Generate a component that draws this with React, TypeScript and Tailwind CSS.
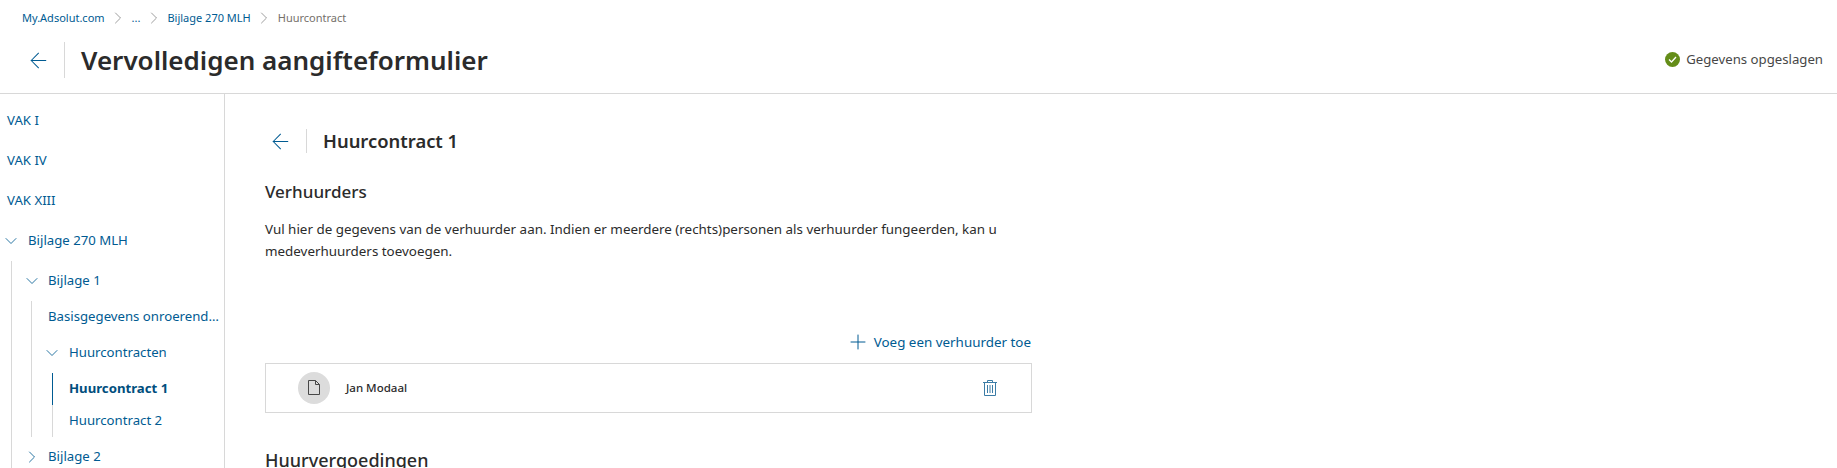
import React from 'react';
import { ArrowLeft, ChevronDown, ChevronRight, Plus } from 'lucide-react';

const font = { fontFamily: '"Noto Sans", sans-serif' };

const Crumb: React.FC<{ label: string; muted?: boolean; last?: boolean }> = ({ label, muted, last }) => (
  <>
    <span className={muted ? 'text-[#75706b]' : 'text-[#005b92]'}>{label}</span>
    {!last && <ChevronRight className="w-[20px] h-[20px] text-[#8a8a8a] mx-[3.5px]" strokeWidth={1} />}
  </>
);

const FileIcon = () => (
  <svg width="14" height="16" viewBox="0 0 14 16" fill="none" stroke="#474747" strokeWidth="1">
    <path d="M1.5 0.5H8.5L12.5 4.5V14.5H1.5Z" />
    <path d="M8.5 0.5V4.5H12.5" />
  </svg>
);

const TrashIcon = () => (
  <svg className="ml-auto text-[#3b7ca6]" width="14" height="16" viewBox="0 0 14 16" fill="none" stroke="currentColor" strokeWidth="1">
    <path d="M0 2.5H14" />
    <path d="M4.5 2.5V0.5H9.5V2.5" />
    <path d="M1.5 2.5V15.5H12.5V2.5" />
    <path d="M4.5 5V13M7 5V13M9.5 5V13" />
  </svg>
);

const App: React.FC = () => {
  return (
    <div className="w-[1837px] h-[468px] overflow-hidden bg-white text-[#2b2b2b] flex flex-col" style={font}>
      {/* Header */}
      <header className="h-[94px] shrink-0 border-b border-[#d8d8d8] flex flex-col">
        <nav className="flex items-center h-[20px] mt-[8px] pl-[22px] text-[11px]">
          <Crumb label="My.Adsolut.com" />
          <Crumb label="..." />
          <Crumb label="Bijlage 270 MLH" />
          <Crumb label="Huurcontract" muted last />
        </nav>
        <div className="flex items-center mt-[14px] h-[36px]">
          <div className="w-[65px] h-full border-r border-[#d8d8d8] flex items-center pl-[26px] mr-[16px] shrink-0">
            <ArrowLeft className="w-[25px] h-[25px] shrink-0 text-[#005b92]" strokeWidth={1} />
          </div>
          <h1 className="text-[26px] font-semibold leading-none">Vervolledigen aangifteformulier</h1>
          <div className="ml-auto pr-[14px] flex items-center text-[13.2px] text-[#474747]">
            <span className="w-[15px] h-[15px] rounded-full bg-[#648d18] flex items-center justify-center mr-[6px]">
              <svg width="9" height="7" viewBox="0 0 9 7" fill="none" stroke="white" strokeWidth="1.3">
                <path d="M1 3.5L3.5 6L8 1" />
              </svg>
            </span>
            Gegevens opgeslagen
          </div>
        </div>
      </header>

      <div className="flex flex-1 min-h-0">
        {/* Sidebar */}
        <aside className="w-[225px] shrink-0 border-r border-[#d8d8d8] text-[13.2px] text-[#005b92] pt-[7px]">
          <div className="h-[40px] flex items-center pl-[7px]">VAK I</div>
          <div className="h-[40px] flex items-center pl-[7px]">VAK IV</div>
          <div className="h-[40px] flex items-center pl-[7px]">VAK XIII</div>
          <div className="h-[40px] flex items-center pl-[1px]">
            <ChevronDown className="w-[20px] h-[20px] mr-[7px]" strokeWidth={1} />
            Bijlage 270 MLH
          </div>
          <div className="ml-[11px] border-l border-[#d8d8d8] pl-[10px]">
            <div className="h-[40px] flex items-center">
              <ChevronDown className="w-[20px] h-[20px] mr-[6px]" strokeWidth={1} />
              Bijlage 1
            </div>
            <div className="ml-[9px] border-l border-[#d8d8d8] pl-[16px]">
              <div className="h-[32px] flex items-center w-[173px]">
                <span className="truncate">Basisgegevens onroerend goed</span>
              </div>
              <div className="h-[40px] flex items-center -ml-[6px]">
                <ChevronDown className="w-[20px] h-[20px] mr-[7px]" strokeWidth={1} />
                Huurcontracten
              </div>
              <div className="ml-[4px]">
                <div className="h-[32px] border-l border-[#005b92] pl-[16px] flex items-center font-bold text-[#004e7d]">
                  Huurcontract 1
                </div>
                <div className="h-[32px] border-l border-[#d8d8d8] pl-[16px] flex items-center">Huurcontract 2</div>
              </div>
            </div>
            <div className="h-[40px] flex items-center">
              <ChevronRight className="w-[20px] h-[20px] mr-[6px]" strokeWidth={1} />
              Bijlage 2
            </div>
          </div>
        </aside>

        {/* Main */}
        <main className="flex-1 pl-[40px] pt-[35px]">
          <div className="w-[767px]">
            <div className="flex items-center h-[24px]">
              <div className="w-[42px] h-full border-r border-[#d8d8d8] flex items-center pl-[2.5px] mr-[16px] shrink-0">
                <ArrowLeft className="w-[25px] h-[25px] shrink-0 text-[#005b92]" strokeWidth={1} />
              </div>
              <h2 className="text-[18.4px] font-semibold leading-none">Huurcontract 1</h2>
            </div>
            <h3 className="text-[17px] font-medium leading-none mt-[30px]">Verhuurders</h3>
            <p className="text-[13.4px] leading-[21.5px] mt-[19px] w-[750px]">
              Vul hier de gegevens van de verhuurder aan. Indien er meerdere (rechts)personen als verhuurder fungeerden, kan u medeverhuurders toevoegen.
            </p>
            <div className="flex justify-end items-center text-[13.4px] text-[#005b92] mt-[70px] h-[20px] pr-[1px]">
              <Plus className="w-[24px] h-[24px] mr-[4px]" strokeWidth={1} />
              Voeg een verhuurder toe
            </div>
            <div className="mt-[11px] h-[50px] border border-[#d8d8d8] flex items-center pl-[32px] pr-[34px]">
              <span className="w-[32px] h-[32px] rounded-full bg-[#dcdcdc] flex items-center justify-center mr-[16px]">
                <FileIcon />
              </span>
              <span className="text-[11.5px] font-medium">Jan Modaal</span>
              <TrashIcon />
            </div>
            <h3 className="text-[18px] font-medium leading-none mt-[38px]">Huurvergoedingen</h3>
          </div>
        </main>
      </div>
    </div>
  );
};

export default App;
